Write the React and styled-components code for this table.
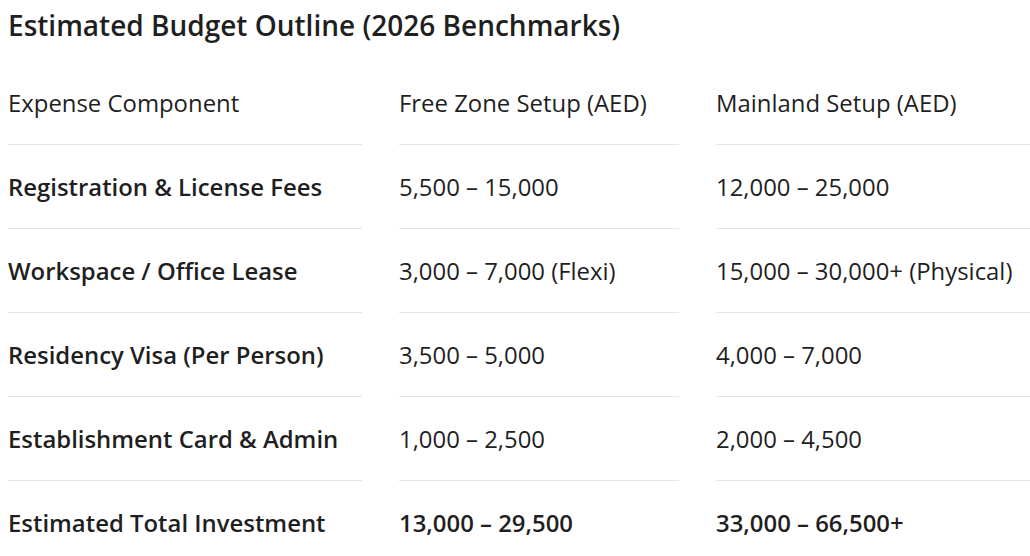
import styled, { createGlobalStyle } from 'styled-components';

const GlobalStyle = createGlobalStyle`
  html, body {
    margin: 0;
    padding: 0;
    background: #ffffff;
    overflow: hidden;
  }
  body {
    font-family: "Open Sans", Roboto, Arial, sans-serif;
    color: #1f1f1f;
  }
`;

const Page = styled.div`
  padding: 8px 0 0 8px;
  width: 1100px;
`;

const Title = styled.h2`
  margin: 0;
  font-size: 28px;
  font-weight: 600;
  line-height: 34px;
`;

const Table = styled.div`
  margin-top: 19px;
  display: grid;
  grid-template-columns: 354px 280px 380px;
  column-gap: 37px;
`;

const Cell = styled.div`
  height: 83px;
  display: flex;
  align-items: center;
  font-size: 23.9px;
  font-weight: ${({ bold }) => (bold ? 600 : 400)};
  border-bottom: ${({ last }) => (last ? 'none' : '1px solid #e5e5e5')};
  white-space: nowrap;
`;

const rows = [
  ['Registration & License Fees', '5,500 – 15,000', '12,000 – 25,000'],
  ['Workspace / Office Lease', '3,000 – 7,000 (Flexi)', '15,000 – 30,000+ (Physical)'],
  ['Residency Visa (Per Person)', '3,500 – 5,000', '4,000 – 7,000'],
  ['Establishment Card & Admin', '1,000 – 2,500', '2,000 – 4,500'],
];

const App = () => (
  <>
    <GlobalStyle />
    <Page>
      <Title>Estimated Budget Outline (2026 Benchmarks)</Title>
      <Table>
        <Cell>Expense Component</Cell>
        <Cell>Free Zone Setup (AED)</Cell>
        <Cell>Mainland Setup (AED)</Cell>
        {rows.map(([label, free, main]) => (
          <>
            <Cell bold>{label}</Cell>
            <Cell>{free}</Cell>
            <Cell>{main}</Cell>
          </>
        ))}
        <Cell bold last>Estimated Total Investment</Cell>
        <Cell bold last>13,000 – 29,500</Cell>
        <Cell bold last>33,000 – 66,500+</Cell>
      </Table>
    </Page>
  </>
);

export default App;
